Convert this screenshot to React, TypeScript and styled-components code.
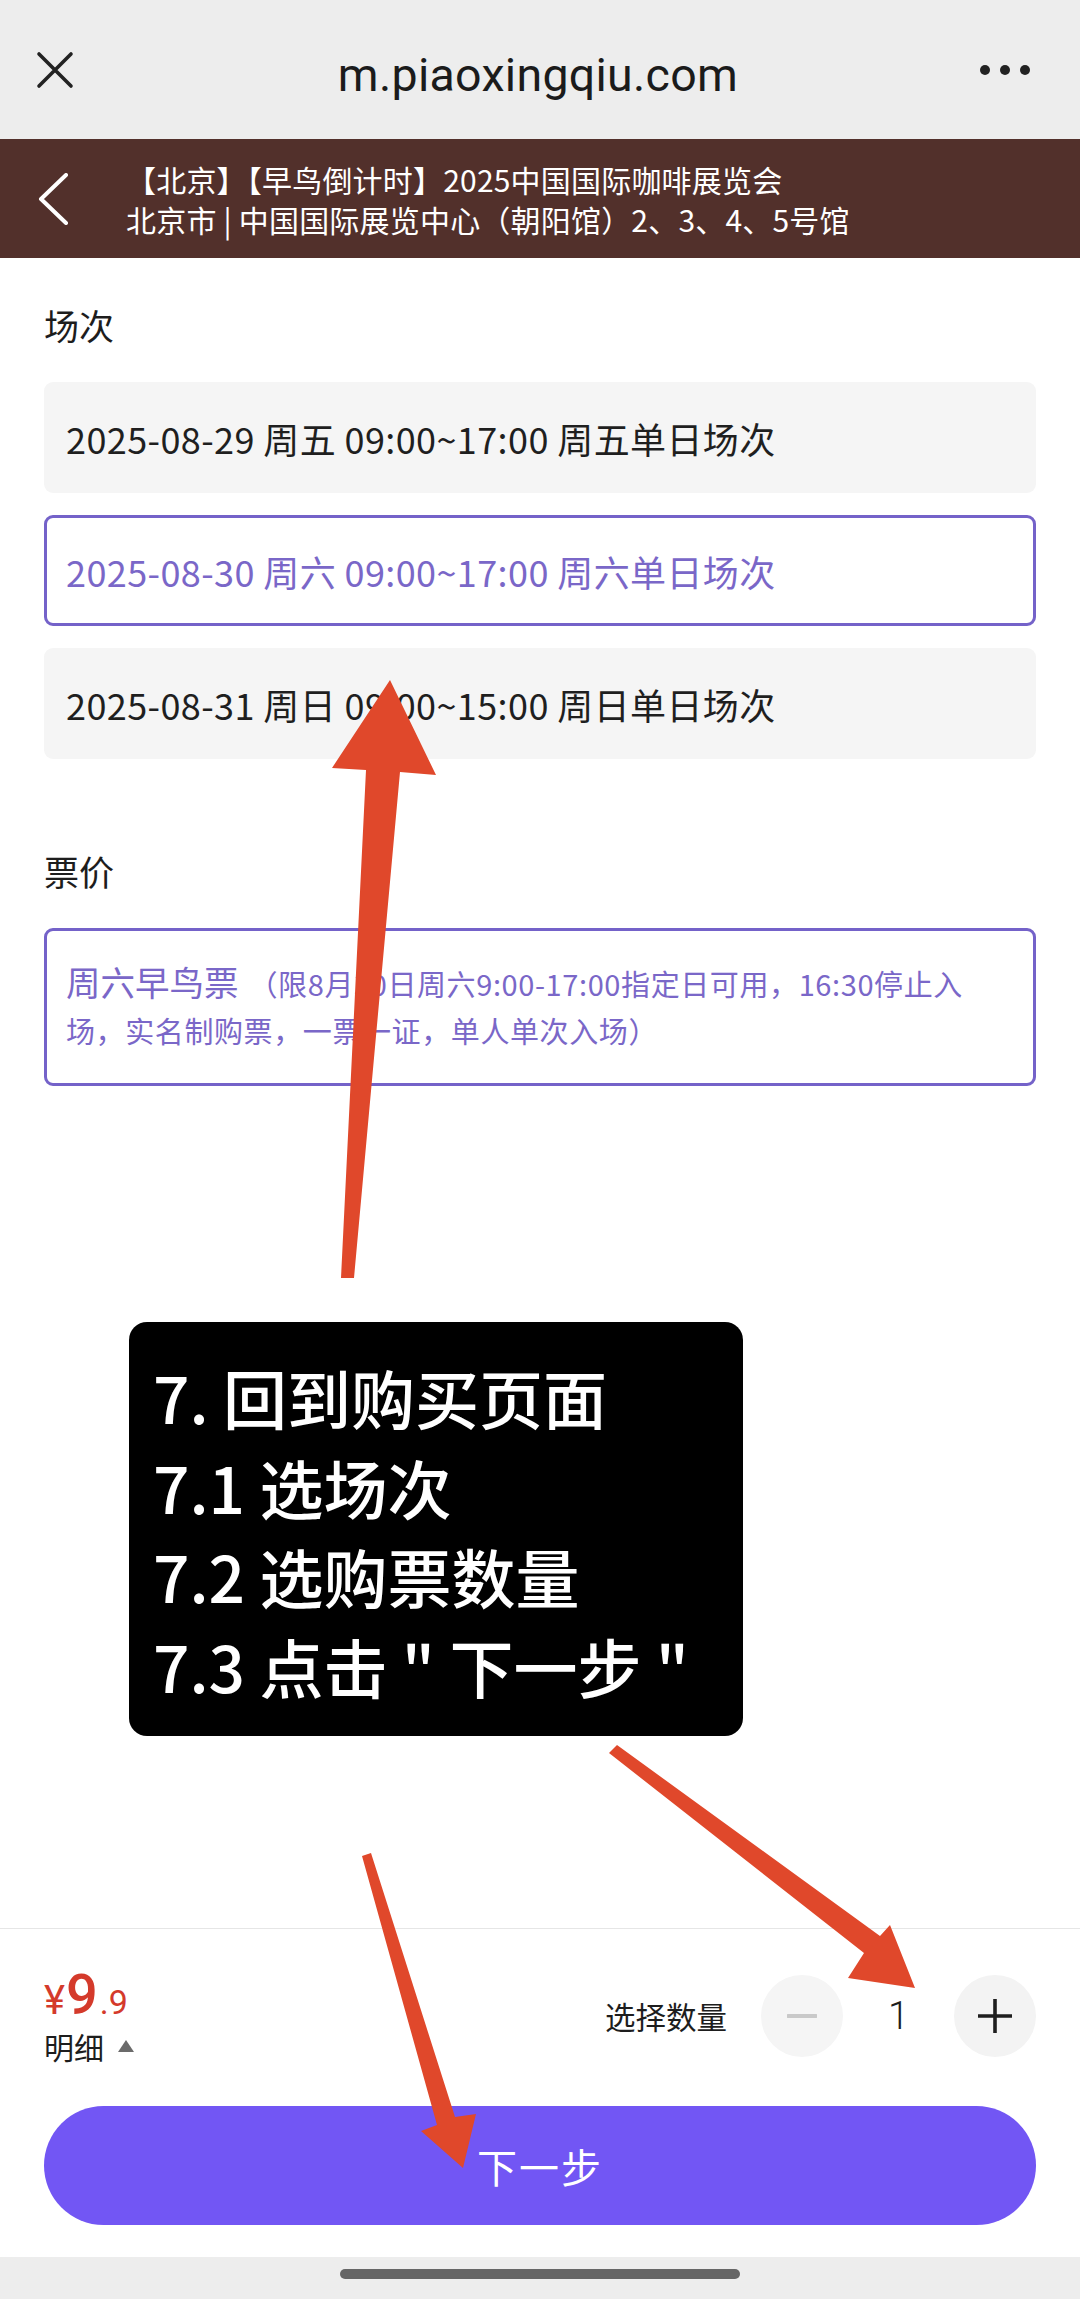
import styled, { createGlobalStyle } from 'styled-components';

interface CardProps {
    active?: boolean;
}

interface CircleProps {
    disabled?: boolean;
}

const sessions = [
    { text: '2025-08-29 周五 09:00~17:00 周五单日场次', active: false },
    { text: '2025-08-30 周六 09:00~17:00 周六单日场次', active: true },
    { text: '2025-08-31 周日 09:00~15:00 周日单日场次', active: false },
];

const steps = ['7. 回到购买页面', '7.1 选场次', '7.2 选购票数量', '7.3 点击 " 下一步 "'];

function App() {
    return (
        <>
            <GlobalStyle />
            <Page>
                <TopBar>
                    <svg width='38' height='38' viewBox='0 0 38 38'>
                        <path d='M3 3 L35 35 M35 3 L3 35' stroke='#222' strokeWidth='3.6' strokeLinecap='round' />
                    </svg>
                    <Url>m.piaoxingqiu.com</Url>
                    <Dots>
                        <span />
                        <span />
                        <span />
                    </Dots>
                </TopBar>

                <EventBar>
                    <svg width='32' height='52' viewBox='0 0 32 52'>
                        <path d='M29 2 L4 26 L29 50' fill='none' stroke='#fff' strokeWidth='4' strokeLinecap='round' strokeLinejoin='round' />
                    </svg>
                    <EventInfo>
                        <p>【北京】【早鸟倒计时】2025中国国际咖啡展览会</p>
                        <p>北京市 | 中国国际展览中心（朝阳馆）2、3、4、5号馆</p>
                    </EventInfo>
                </EventBar>

                <Content>
                    <SectionTitle>场次</SectionTitle>
                    <SessionList>
                        {sessions.map((s) => (
                            <SessionCard key={s.text} active={s.active}>
                                {s.text}
                            </SessionCard>
                        ))}
                    </SessionList>

                    <SectionTitle mt={90}>票价</SectionTitle>
                    <TicketCard>
                        <TicketName>周六早鸟票</TicketName>
                        <TicketNote>
                            （限8月30日周六9:00-17:00指定日可用，16:30停止入
                            <br />
                            场，实名制购票，一票一证，单人单次入场）
                        </TicketNote>
                    </TicketCard>
                </Content>

                <Footer>
                    <PriceRow>
                        <PriceCol>
                            <Price>
                                <small>¥</small>
                                <b>9</b>
                                <i>.9</i>
                            </Price>
                            <Detail>
                                明细 <Caret />
                            </Detail>
                        </PriceCol>
                        <Stepper>
                            <StepLabel>选择数量</StepLabel>
                            <Circle disabled>
                                <svg width='30' height='30' viewBox='0 0 30 30'>
                                    <path d='M1 15 H29' stroke='#c9c9c9' strokeWidth='4' strokeLinecap='round' />
                                </svg>
                            </Circle>
                            <Count>1</Count>
                            <Circle>
                                <svg width='36' height='36' viewBox='0 0 36 36'>
                                    <path d='M1 18 H35 M18 1 V35' stroke='#1e1e1e' strokeWidth='3.6' />
                                </svg>
                            </Circle>
                        </Stepper>
                    </PriceRow>
                    <NextButton>下一步</NextButton>
                </Footer>

                <HomeBar>
                    <span />
                </HomeBar>

                <Callout>
                    {steps.map((s) => (
                        <p key={s}>{s}</p>
                    ))}
                </Callout>

                <Arrows width='1080' height='2299' viewBox='0 0 1080 2299'>
                    <polygon points='341,1278 366,770 332,768 390,680 436,775 400,772 354,1278' />
                    <polygon points='609,1753 617,1745 880,1936 890,1925 915,1988 848,1978 864,1953' />
                    <polygon points='362,1856 371,1853 455,2117 476,2114 463,2168 421,2131 437,2125' />
                </Arrows>
            </Page>
        </>
    );
}

export default App;

const GlobalStyle = createGlobalStyle`
    body {
        margin: 0;
        background: #fff;
        font-family: 'Noto Sans CJK SC', 'Noto Sans', sans-serif;
    }

    p {
        margin: 0;
    }
`;

const Page = styled.div`
    position: relative;
    width: 1080px;
    height: 2299px;
    display: flex;
    flex-direction: column;
    overflow: hidden;
    background: #fff;
`;

const TopBar = styled.div`
    height: 139px;
    flex-shrink: 0;
    background: #ededed;
    display: grid;
    grid-template-columns: 1fr auto 1fr;
    align-items: center;
    padding: 0 50px 0 36px;
    box-sizing: border-box;
`;

const Url = styled.div`
    font-family: Roboto, 'Noto Sans', sans-serif;
    font-size: 46.5px;
    color: #1b1b1b;
    letter-spacing: 0.3px;
    margin: 10px 0 0 10px;
`;

const Dots = styled.div`
    justify-self: end;
    display: flex;
    gap: 10px;

    span {
        width: 10px;
        height: 10px;
        border-radius: 50%;
        background: #222;
    }
`;

const EventBar = styled.div`
    height: 119px;
    flex-shrink: 0;
    background: #52302b;
    display: flex;
    align-items: center;
    padding-left: 37px;
    gap: 57px;
`;

const EventInfo = styled.div`
    color: #fff;
    font-size: 30px;
    line-height: 40px;
    letter-spacing: 0.2px;
`;

const Content = styled.div`
    display: flex;
    flex-direction: column;
    padding: 0 44px;
`;

const SectionTitle = styled.div<{ mt?: number }>`
    font-size: 35px;
    line-height: 43px;
    color: #1d1d1d;
    margin-top: ${(props) => (props.mt ? props.mt : 45)}px;
    margin-bottom: 36px;
`;

const SessionList = styled.div`
    display: flex;
    flex-direction: column;
    gap: 22px;
`;

const SessionCard = styled.div<CardProps>`
    height: 111px;
    box-sizing: border-box;
    display: flex;
    align-items: center;
    padding-left: 19px;
    border-radius: 9px;
    border: 3px solid ${(props) => (props.active ? '#7462c9' : 'transparent')};
    background: ${(props) => (props.active ? '#fff' : '#f5f5f5')};
    color: ${(props) => (props.active ? '#7a67c8' : '#1f1f1f')};
    font-size: 36px;
    letter-spacing: 0.4px;
`;

const TicketCard = styled.div`
    border: 3px solid #7462c9;
    border-radius: 9px;
    padding: 29px 20px 29px 19px;
    color: #7a67c8;
    font-size: 29px;
    line-height: 47px;
`;

const TicketName = styled.span`
    font-size: 34.5px;
    line-height: 34px;
`;

const TicketNote = styled.span`
    margin-left: 10px;
    letter-spacing: 0.6px;
`;

const Footer = styled.div`
    margin-top: auto;
    border-top: 1px solid #e6e6e6;
    padding: 36px 44px 32px;
    display: flex;
    flex-direction: column;
`;

const PriceRow = styled.div`
    display: flex;
    justify-content: space-between;
    align-items: center;
    margin-bottom: 40px;
`;

const PriceCol = styled.div`
    display: flex;
    flex-direction: column;
`;

const Price = styled.div`
    height: 56px;
    display: flex;
    align-items: baseline;
    padding-top: 2px;
    box-sizing: border-box;
    font-family: Roboto, 'Noto Sans', sans-serif;
    color: #d43a2b;
    line-height: 1;

    small {
        font-size: 40px;
    }

    b {
        font-size: 56px;
        font-weight: 500;
        margin-left: 1px;
    }

    i {
        font-style: normal;
        font-size: 34px;
        margin-left: 2px;
    }
`;

const Detail = styled.div`
    margin-top: 5px;
    font-size: 30px;
    line-height: 40px;
    color: #1d1d1d;
    display: flex;
    align-items: center;
    gap: 14px;
`;

const Caret = styled.span`
    width: 0;
    height: 0;
    border-left: 8px solid transparent;
    border-right: 8px solid transparent;
    border-bottom: 12px solid #6b6b6b;
`;

const Stepper = styled.div`
    display: flex;
    align-items: center;
`;

const StepLabel = styled.div`
    font-size: 30.5px;
    color: #1d1d1d;
    margin-right: 34px;
`;

const Circle = styled.div<CircleProps>`
    width: 82px;
    height: 82px;
    border-radius: 50%;
    background: ${(props) => (props.disabled ? '#f5f5f5' : '#f3f3f3')};
    display: flex;
    align-items: center;
    justify-content: center;
`;

const Count = styled.div`
    width: 111px;
    text-align: center;
    font-family: Roboto, sans-serif;
    font-weight: 300;
    font-size: 38px;
    color: #1d1d1d;
`;

const NextButton = styled.button`
    height: 119px;
    border: none;
    border-radius: 60px;
    background: #7256f4;
    color: #fff;
    font-family: inherit;
    font-size: 40px;
    letter-spacing: 2px;
`;

const HomeBar = styled.div`
    height: 42px;
    flex-shrink: 0;
    background: #ededed;
    display: flex;
    justify-content: center;
    padding-top: 12px;
    box-sizing: border-box;

    span {
        width: 400px;
        height: 10px;
        border-radius: 5px;
        background: #666;
    }
`;

const Callout = styled.div`
    position: absolute;
    left: 129px;
    top: 1322px;
    width: 614px;
    height: 414px;
    box-sizing: border-box;
    background: #000;
    border-radius: 18px;
    padding: 30px 0 0 24px;
    color: #fff;
    font-size: 64px;
    font-weight: 500;
    line-height: 89.5px;
    white-space: pre;
`;

const Arrows = styled.svg`
    position: absolute;
    left: 0;
    top: 0;
    pointer-events: none;
    fill: #e0482b;
`;
